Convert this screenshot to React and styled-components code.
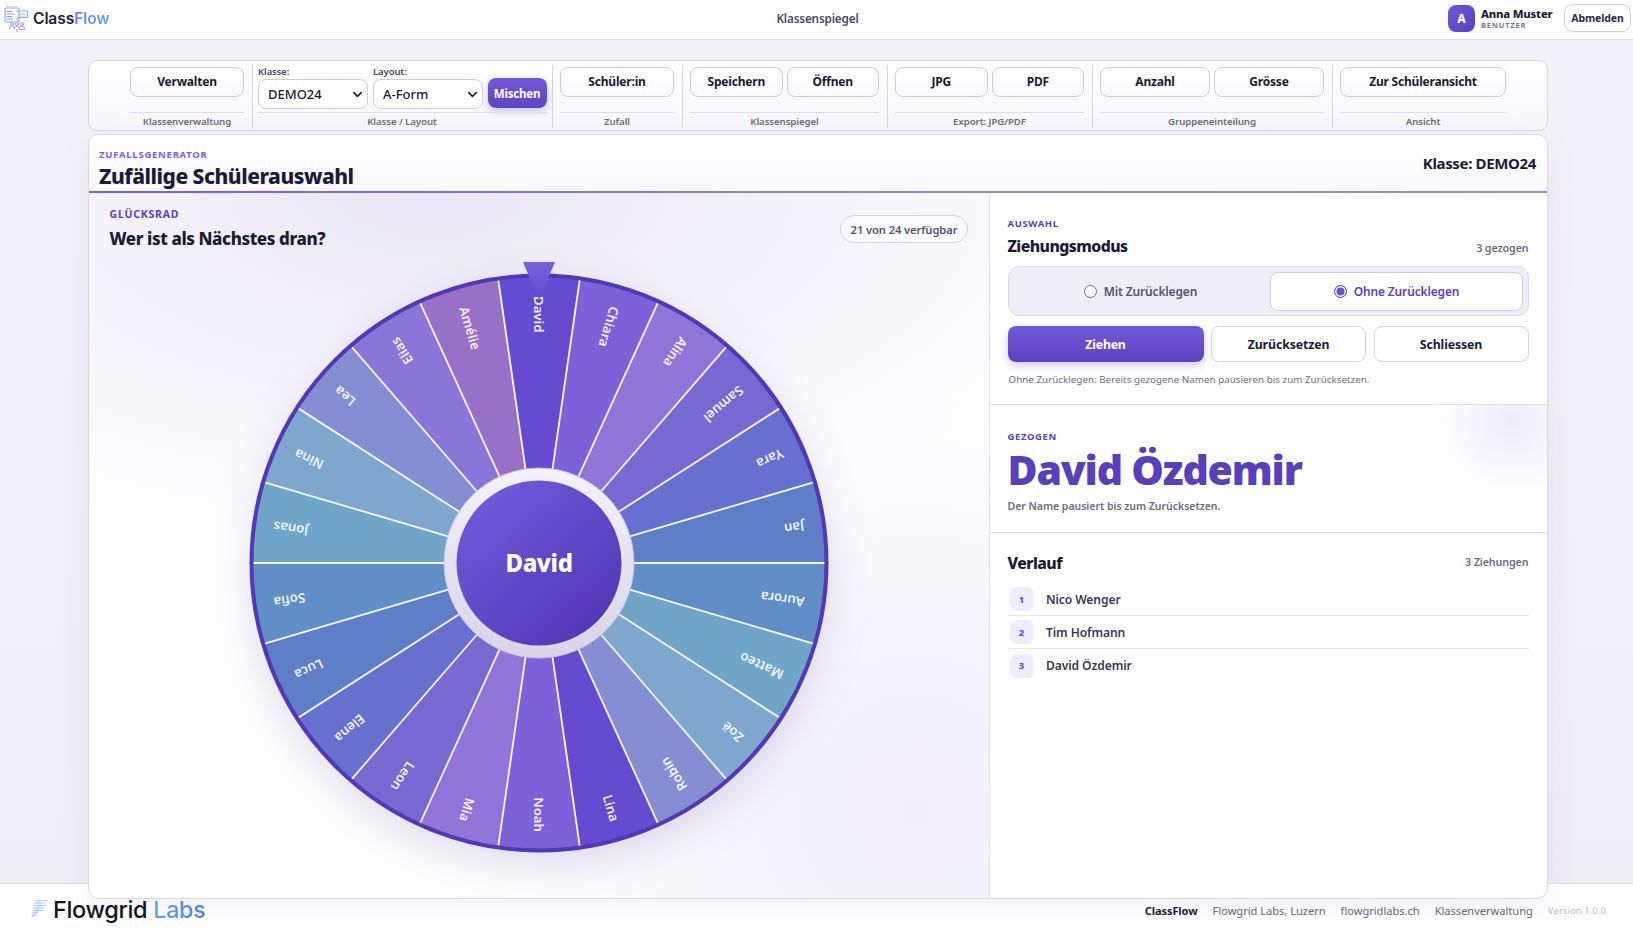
import React from "react";
import styled, { createGlobalStyle } from "styled-components";
import { ChevronDown } from "lucide-react";

const Global = createGlobalStyle`
  html, body { margin: 0; padding: 0; height: 100%; overflow: hidden; }
  body { background: #f3f1f8; font-family: "Noto Sans", "Open Sans", sans-serif; color: #1b1a33; }
  * { box-sizing: border-box; }
`;

const Page = styled.div`
  height: 929px; display: flex; flex-direction: column;
  background: linear-gradient(180deg, #f4f2f9, #efedf6);
`;
const Header = styled.header`
  height: 40px; flex: none; display: grid; grid-template-columns: 1fr auto 1fr; align-items: center;
  background: #fff; border-bottom: 1px solid #dcd8e8; padding: 0 2px 3px 4px;
`;
const Brand = styled.div`display: flex; align-items: center; gap: 4px;`;
const BrandName = styled.span`
  font-family: Inter, sans-serif; font-size: 15.6px; font-weight: 600; color: #1e2238; letter-spacing: -0.1px;
`;
const BrandAccent = styled.span`
  background: linear-gradient(90deg, #6a78e8, #62a6f2); -webkit-background-clip: text; background-clip: text; color: transparent;
`;
const PageName = styled.div`font-size: 11.7px; font-weight: 600; color: #454a60; letter-spacing: -0.15px;`;
const UserArea = styled.div`display: flex; align-items: center; justify-content: flex-end;`;
const Avatar = styled.div`
  width: 27px; height: 27px; border-radius: 8px; display: flex; align-items: center; justify-content: center;
  background: linear-gradient(135deg, #7058d8, #5a40bd); color: #fff; font-size: 12px; font-weight: 800;
`;
const UserText = styled.div`display: flex; flex-direction: column; margin-left: 6px; margin-right: 12px; width: 71px;`;
const UserName = styled.div`font-size: 11.3px; line-height: 13px; font-weight: 800; color: #1b1a33; letter-spacing: -0.2px; white-space: nowrap;`;
const UserRole = styled.div`font-size: 7.5px; line-height: 10px; font-weight: 700; color: #7a7890; letter-spacing: 0.8px;`;
const Logout = styled.button`
  width: 67px; height: 28px; border-radius: 9px; border: 1px solid #d3cde3; background: #fff;
  font: 700 10.5px "Noto Sans", sans-serif; color: #2b2a44; padding: 0; letter-spacing: -0.1px;
`;

const Workspace = styled.main`
  height: 858px; flex: none; margin-bottom: -15px; padding: 20px 85px 0 88px; position: relative; z-index: 1;
  display: flex; flex-direction: column; gap: 3px;
`;
const Toolbar = styled.div`
  height: 71px; flex: none; display: flex; justify-content: center; padding: 4px 0 2px;
  background: linear-gradient(180deg, #fff, #f7f6fb); border: 1px solid #d9d5e6; border-radius: 9px;
`;
const Group = styled.section`
  width: ${p => p.$width}px; padding: 2px ${p => p.$pad || 7.5}px 0; display: flex; flex-direction: column;
  border-right: ${p => (p.$last ? "none" : "1px solid #d9d5e6")};
`;
const GroupBody = styled.div`height: 45px; flex: none; display: flex; gap: ${p => p.$gap || 4}px; align-items: flex-start;`;
const GroupLabel = styled.div`
  border-top: 1px solid #e0dcea; height: 18px; line-height: 18px; text-align: center;
  font-size: 9.7px; font-weight: 600; color: #6c6a82; letter-spacing: -0.1px; white-space: nowrap;
`;
const ToolButton = styled.button`
  flex: 1; height: 30px; border-radius: 8px; border: 1px solid #cfcae0; background: linear-gradient(180deg, #fff, #faf9fd);
  font: 700 12px "Noto Sans", sans-serif; color: #1b1a33; letter-spacing: -0.2px; padding: 0 0 2px;
`;
const Field = styled.label`
  width: 110.5px; display: flex; flex-direction: column; gap: 2px;
  font-size: 9.5px; font-weight: 600; color: #45435c; line-height: 10px; letter-spacing: -0.1px; margin-top: 0; padding-left: 0.5px;
`;
const SelectWrap = styled.div`position: relative; height: 30px;`;
const Select = styled.select`
  appearance: none; width: 100%; height: 30px; border-radius: 8px; border: 1px solid #cfcae0; background: #fff;
  font: 500 13px "Noto Sans", sans-serif; color: #1b1a33; padding: 0 0 0 9px;
`;
const SelectIcon = styled(ChevronDown)`position: absolute; right: 3px; top: 8px; color: #1b1a33; pointer-events: none;`;
const Shuffle = styled.button`
  width: 59px; height: 30px; margin-top: 11px; border-radius: 8px; border: none; padding: 1px 0 0;
  background: linear-gradient(180deg, #7058d8, #5f45c4); box-shadow: 0 3px 8px rgba(90, 64, 190, .3);
  color: #fff; font: 700 11.5px "Noto Sans", sans-serif; letter-spacing: -0.2px;
`;

const Card = styled.div`
  height: 765px; flex: none; display: flex; flex-direction: column; background: #fff; overflow: hidden;
  border: 1px solid #dbd7e7; border-radius: 11px; box-shadow: 0 10px 32px rgba(80, 60, 160, .07);
`;
const CardHead = styled.div`
  height: 58px; flex: none; padding: 12px 10px 0; display: flex; justify-content: space-between; align-items: center;
  background: linear-gradient(180deg, #fff, #f9f8fc); border-bottom: 2px solid; border-image: linear-gradient(90deg, #7a5cd8, #9585dc 60%, #8794da) 1;
`;
const HeadText = styled.div`display: flex; flex-direction: column;`;
const Kicker = styled.div`
  font-size: ${p => p.$size || 9.5}px; line-height: 12px; font-weight: 700; letter-spacing: ${p => p.$spacing || 0.6}px; color: ${p => p.$color || "#5a3fbc"};
`;
const PageTitle = styled.h1`margin: 1px 0 -2px; font-size: 21px; line-height: 29px; font-weight: 800; color: #1a1c36; letter-spacing: -0.5px;`;
const ClassTag = styled.div`font-size: 15px; font-weight: 700; color: #1a1c36; margin-top: -13px; margin-right: 1px; letter-spacing: -0.35px;`;

const Split = styled.div`flex: 1; display: grid; grid-template-columns: 901px 1fr; min-height: 0;`;
const WheelPanel = styled.div`
  border-right: 1px solid #e2deec; display: flex; flex-direction: column;
  background:
    radial-gradient(ellipse 80% 50% at 38% 0%, #ebe7f7, rgba(235, 231, 247, 0) 100%),
    radial-gradient(circle 420px at 92% 88%, #f1eefa, rgba(241, 238, 250, 0) 100%),
    #fefefe;
`;
const WheelHead = styled.div`
  height: 70px; flex: none; padding: 15px 21px 0 20.5px; display: flex; justify-content: space-between; align-items: flex-start;
`;
const WheelQuestion = styled.h2`margin: 7px 0 0; font-size: 17px; line-height: 24px; font-weight: 800; color: #1b1a33; letter-spacing: -0.4px;`;
const Pill = styled.div`
  height: 28px; width: 128px; margin-top: 7px; border-radius: 14px; border: 1px solid #d8d3e6; background: #fbfaff;
  display: flex; align-items: center; justify-content: center; font-size: 11.2px; font-weight: 600; color: #55536c; letter-spacing: -0.1px;
`;
const WheelSvg = styled.svg`
  width: 600px; height: 600px; align-self: center; flex: none; overflow: visible;
`;
const WheelDisc = styled.g`filter: drop-shadow(0 14px 20px rgba(70, 50, 150, .17));`;
const WheelLabel = styled.text`
  font: 600 13.2px "Noto Sans", sans-serif; fill: rgba(255, 255, 255, .92);
`;
const HubLabel = styled.text`font: 800 24px "Noto Sans", sans-serif; fill: #fff; letter-spacing: -0.4px;`;

const SidePanel = styled.div`display: flex; flex-direction: column;`;
const ModeSection = styled.div`height: 212px; flex: none; padding: 25px 18.5px 0 17.5px; border-bottom: 1px solid #e2deec;`;
const TitleRow = styled.div`
  margin-top: ${p => p.$top || 0}px; display: flex; justify-content: space-between; align-items: center;
`;
const PanelTitle = styled.h3`margin: 0; font-size: 15.8px; line-height: 24px; font-weight: 800; color: #1b1a33; letter-spacing: -0.55px;`;
const Counter = styled.div`
  font-size: 10.7px; font-weight: 600; color: #6c6a82; letter-spacing: -0.1px; transform: translateY(${p => p.$shift || 0}px);
`;
const Segmented = styled.div`
  height: 50px; margin-top: 8px; padding: 4.5px; display: grid; grid-template-columns: 1fr 1fr; gap: 0;
  background: #efedf8; border: 1px solid #dcd8e9; border-radius: 11px;
`;
const Segment = styled.label`
  display: flex; align-items: center; justify-content: center; gap: 7px; font-size: 12px; font-weight: 600; letter-spacing: -0.15px;
  color: ${p => (p.$active ? "#5a3fbc" : "#55536c")}; background: ${p => (p.$active ? "#fff" : "transparent")};
  border: ${p => (p.$active ? "1px solid #d3cde3" : "1px solid transparent")}; border-radius: 8px;
  margin-left: ${p => (p.$active ? "2px" : "0")};
`;
const Radio = styled.span`
  width: 13px; height: 13px; border-radius: 50%; flex: none; background: #fff;
  border: ${p => (p.$on ? "1.5px solid #6a50d0" : "1px solid #6f6d80")};
  box-shadow: ${p => (p.$on ? "inset 0 0 0 1.5px #fff" : "none")};
  ${p => p.$on && "background: #6a50d0;"}
`;
const ActionRow = styled.div`margin-top: 10px; display: grid; grid-template-columns: 196px 155px 155px; gap: 7.5px;`;
const PrimaryAction = styled.button`
  height: 36px; border: none; border-radius: 8px; background: linear-gradient(180deg, #7259da, #5c42be);
  box-shadow: 0 4px 10px rgba(90, 64, 190, .25); color: #fff; font: 700 12.3px "Noto Sans", sans-serif; letter-spacing: -0.2px; padding: 0;
`;
const Action = styled.button`
  height: 36px; border: 1px solid #d3d3e8; border-radius: 8px; background: #fff; color: #1b1a33;
  font: 700 12.3px "Noto Sans", sans-serif; letter-spacing: -0.1px; padding: 0;
`;
const Hint = styled.p`margin: 12px 0 0 1px; font-size: 9.8px; line-height: 12px; color: #6c6a82; letter-spacing: .02px;`;

const ResultSection = styled.div`
  height: 128px; flex: none; padding: 26px 18.5px 0 17.5px; border-bottom: 1px solid #e2deec;
  background: radial-gradient(circle 82px at 523px 16px, #efecfb, rgba(239, 236, 251, 0) 100%);
`;
const ResultName = styled.div`
  font-size: 41px; line-height: 50px; font-weight: 900; color: #5a3fbc; letter-spacing: -1.2px; margin-top: 1px; white-space: nowrap;
`;
const ResultNote = styled.div`font-size: 10.5px; line-height: 14px; font-weight: 600; color: #6c6a82; margin-top: 5px; letter-spacing: -0.02px;`;

const HistorySection = styled.div`padding: 18px 18.5px 0 17.5px;`;
const HistoryList = styled.ol`margin: 8px 0 0; padding: 0; list-style: none;`;
const HistoryRow = styled.li`
  height: 33px; padding: 4px 0 4px 2px; display: flex; align-items: center; gap: 12.5px;
  border-bottom: ${p => (p.$last ? "none" : "1px solid #e6e3ef")};
  font-size: 12.1px; font-weight: 600; color: #3a3852; letter-spacing: -0.1px;
`;
const Badge = styled.span`
  width: 24px; height: 24px; border-radius: 7px; background: #efecfb; color: #6a50d0; flex: none;
  display: flex; align-items: center; justify-content: center; font-size: 9.5px; font-weight: 800;
`;

const Footer = styled.footer`
  flex: 1; display: flex; justify-content: space-between; align-items: center; background: #fff;
  border-top: 1px solid #dedaea; padding: 6px 27px 0 31px;
`;
const FooterBrand = styled.div`display: flex; align-items: center; gap: 5px; margin-top: -1px;`;
const FooterName = styled.span`font-family: Inter, sans-serif; font-size: 23.5px; font-weight: 500; color: #12141f; letter-spacing: -0.35px;`;
const FooterAccent = styled.span`
  background: linear-gradient(90deg, #6aa8ee, #4a80ee); -webkit-background-clip: text; background-clip: text; color: transparent;
`;
const FooterLinks = styled.nav`display: flex; align-items: center; gap: 15px; font-size: 11.1px; color: #656a7c; letter-spacing: -0.02px; margin-top: 1px;`;
const FooterStrong = styled.span`font-weight: 700; color: #1a1c36; letter-spacing: -0.1px;`;
const FooterVersion = styled.span`font-size: 9.7px; color: #b9bdca;`;

const NAMES = ["David","Chiara","Alina","Samuel","Yara","Jan","Aurora","Matteo","Zoë","Robin","Lina","Noah","Mia","Leon","Elena","Luca","Sofia","Jonas","Nina","Lea","Elias","Amélie"];
const COLORS = ["#654bcf","#7c62d8","#9174da","#7868d2","#6670cf","#5e7fc8","#5f8fc6","#6ea5c8","#7fa6cf","#838fd2","#654bcf","#7c62d8","#9174da","#7868d2","#6670cf","#5e7fc8","#5f8fc6","#6ea5c8","#7fa6cf","#838fd2","#8a76d8","#9870c8"];
const C = 300, R = 286, STEP = 360 / NAMES.length;
const polar = (r, deg) => {
  const a = (deg * Math.PI) / 180;
  return [C + r * Math.sin(a), C - r * Math.cos(a)];
};

function Wheel() {
  return (
    <WheelSvg viewBox="0 0 600 600">
      <defs>
        <linearGradient id="hub" x1="0.15" y1="0.1" x2="0.85" y2="0.9">
          <stop offset="0" stopColor="#7058d8" /><stop offset="1" stopColor="#5238b5" />
        </linearGradient>
        <linearGradient id="ring" x1="0" y1="0" x2="0" y2="1">
          <stop offset="0" stopColor="#f4f2fb" /><stop offset="1" stopColor="#d9d4e8" />
        </linearGradient>
        <linearGradient id="pointer" x1="0" y1="0" x2="0" y2="1">
          <stop offset="0" stopColor="#7662da" /><stop offset="1" stopColor="#654bcf" />
        </linearGradient>
      </defs>
      <WheelDisc>
        <circle cx={C} cy={C} r={288} fill="#5238b5" />
      </WheelDisc>
      {NAMES.map((n, i) => {
        const a0 = i * STEP - STEP / 2, a1 = a0 + STEP;
        const [x0, y0] = polar(R, a0), [x1, y1] = polar(R, a1);
        return <path key={n} d={`M${C} ${C}L${x0} ${y0}A${R} ${R} 0 0 1 ${x1} ${y1}Z`} fill={COLORS[i]} />;
      })}
      {NAMES.map((n, i) => {
        const a = i * STEP - STEP / 2;
        const [x0, y0] = polar(92, a), [x1, y1] = polar(R, a);
        return <line key={n} x1={x0} y1={y0} x2={x1} y2={y1} stroke="#f6f6fc" strokeWidth="1.8" />;
      })}
      <circle cx={C} cy={C} r={287.5} fill="none" stroke="#5238b5" strokeWidth="4" />
      {NAMES.map((n, i) => {
        const theta = i * STEP;
        const flipped = i >= 10 && i <= 20;
        const [x, y] = polar(268, theta);
        return (
          <WheelLabel key={n} x={x} y={y + 1} dy="0.35em" textAnchor={flipped ? "end" : "start"}
            transform={`rotate(${flipped ? theta - 90 : theta + 90} ${x} ${y + 1})`}>{n}</WheelLabel>
        );
      })}
      <circle cx={C} cy={C} r={95} fill="url(#ring)" stroke="#c6bfdc" strokeWidth="1" />
      <circle cx={C} cy={C} r={82.5} fill="url(#hub)" />
      <HubLabel x={C} y={C + 1} dy="0.35em" textAnchor="middle">David</HubLabel>
      <polygon points="284,-1 316,-1 300,37" fill="url(#pointer)" />
    </WheelSvg>
  );
}

function ClassFlowMark() {
  return (
    <svg width="25" height="27" viewBox="0 0 25 27" fill="none" strokeLinecap="round" strokeLinejoin="round">
      <rect x="1" y="3" width="14" height="14" rx="1.5" stroke="#8fa6ee" strokeWidth="1.1" />
      <path d="M3 6.5h5M3 9h7M3 11.5h5M3 14h6" stroke="#8b9cf0" strokeWidth="1" />
      <path d="M3 1.5h.1M6 1.5h.1M9 1.5h.1M12 1.5h.1" stroke="#9a8cec" strokeWidth="1.2" />
      <path d="M12 6h10.5a1.2 1.2 0 0 1 1.2 1.2v4a1.2 1.2 0 0 1-1.2 1.2H15l-2 2" stroke="#78b4f2" strokeWidth="1.1" />
      <path d="M16 9h5" stroke="#78b4f2" strokeWidth="1" />
      <circle cx="8" cy="19" r="1.5" stroke="#a08cea" strokeWidth=".9" />
      <circle cx="13" cy="19" r="1.5" stroke="#a08cea" strokeWidth=".9" />
      <circle cx="18" cy="19" r="1.5" stroke="#a08cea" strokeWidth=".9" />
      <path d="M5.5 24c0-2 1-3 2.5-3s2.5 1 2.5 3M10.5 24c0-2 1-3 2.5-3s2.5 1 2.5 3M15.5 24c0-2 1-3 2.5-3s2.5 1 2.5 3z" stroke="#a08cea" strokeWidth=".9" />
      <path d="M13 24.5v2" stroke="#a08cea" strokeWidth="1" />
    </svg>
  );
}

function FlowgridMark() {
  return (
    <svg width="17" height="20" viewBox="0 0 17 20" fill="none" strokeLinecap="round">
      <path d="M5 1.5h11M4.5 4h10M4 6.5h11" stroke="#a9d2f6" strokeWidth="1" />
      <path d="M3.5 9h9M3 11.5h8" stroke="#9cc4f5" strokeWidth="1" />
      <path d="M2.5 14h4M2 16.5h3" stroke="#93b4f3" strokeWidth="1" />
      <path d="M5 1.5C3.5 6 2 12 1 18.5M8 1.5C6.5 6 5 11 3.5 17M11 1.5C9.5 4 8 9 6 14" stroke="#a9c8f6" strokeWidth=".7" />
    </svg>
  );
}

export default function App() {
  return (
    <>
      <Global />
      <Page>
        <Header>
          <Brand>
            <ClassFlowMark />
            <BrandName>Class<BrandAccent>Flow</BrandAccent></BrandName>
          </Brand>
          <PageName>Klassenspiegel</PageName>
          <UserArea>
            <Avatar>A</Avatar>
            <UserText>
              <UserName>Anna Muster</UserName>
              <UserRole>BENUTZER</UserRole>
            </UserText>
            <Logout>Abmelden</Logout>
          </UserArea>
        </Header>
        <Workspace>
          <Toolbar>
            <Group $width={130}>
              <GroupBody><ToolButton>Verwalten</ToolButton></GroupBody>
              <GroupLabel>Klassenverwaltung</GroupLabel>
            </Group>
            <Group $width={300} $pad={5}>
              <GroupBody $gap={4.5}>
                <Field>Klasse:
                  <SelectWrap>
                    <Select defaultValue="DEMO24"><option>DEMO24</option></Select>
                    <SelectIcon size={15} strokeWidth={2.5} />
                  </SelectWrap>
                </Field>
                <Field>Layout:
                  <SelectWrap>
                    <Select defaultValue="A-Form"><option>A-Form</option></Select>
                    <SelectIcon size={15} strokeWidth={2.5} />
                  </SelectWrap>
                </Field>
                <Shuffle>Mischen</Shuffle>
              </GroupBody>
              <GroupLabel>Klasse / Layout</GroupLabel>
            </Group>
            <Group $width={130}>
              <GroupBody><ToolButton>Schüler:in</ToolButton></GroupBody>
              <GroupLabel>Zufall</GroupLabel>
            </Group>
            <Group $width={205}>
              <GroupBody><ToolButton>Speichern</ToolButton><ToolButton>Öffnen</ToolButton></GroupBody>
              <GroupLabel>Klassenspiegel</GroupLabel>
            </Group>
            <Group $width={205}>
              <GroupBody><ToolButton>JPG</ToolButton><ToolButton>PDF</ToolButton></GroupBody>
              <GroupLabel>Export: JPG/PDF</GroupLabel>
            </Group>
            <Group $width={240}>
              <GroupBody><ToolButton>Anzahl</ToolButton><ToolButton>Grösse</ToolButton></GroupBody>
              <GroupLabel>Gruppeneinteilung</GroupLabel>
            </Group>
            <Group $width={181} $last>
              <GroupBody><ToolButton>Zur Schüleransicht</ToolButton></GroupBody>
              <GroupLabel>Ansicht</GroupLabel>
            </Group>
          </Toolbar>
          <Card>
            <CardHead>
              <HeadText>
                <Kicker $color="#7a5ce6" $size={9.5} $spacing={0.75}>ZUFALLSGENERATOR</Kicker>
                <PageTitle>Zufällige Schülerauswahl</PageTitle>
              </HeadText>
              <ClassTag>Klasse: DEMO24</ClassTag>
            </CardHead>
            <Split>
              <WheelPanel>
                <WheelHead>
                  <div>
                    <Kicker $size={10.5} $spacing={0.8}>GLÜCKSRAD</Kicker>
                    <WheelQuestion>Wer ist als Nächstes dran?</WheelQuestion>
                  </div>
                  <Pill>21 von 24 verfügbar</Pill>
                </WheelHead>
                <Wheel />
              </WheelPanel>
              <SidePanel>
                <ModeSection>
                  <Kicker>AUSWAHL</Kicker>
                  <TitleRow $top={4}>
                    <PanelTitle>Ziehungsmodus</PanelTitle>
                    <Counter $shift={2}>3 gezogen</Counter>
                  </TitleRow>
                  <Segmented>
                    <Segment><Radio />Mit Zurücklegen</Segment>
                    <Segment $active><Radio $on />Ohne Zurücklegen</Segment>
                  </Segmented>
                  <ActionRow>
                    <PrimaryAction>Ziehen</PrimaryAction>
                    <Action>Zurücksetzen</Action>
                    <Action>Schliessen</Action>
                  </ActionRow>
                  <Hint>Ohne Zurücklegen: Bereits gezogene Namen pausieren bis zum Zurücksetzen.</Hint>
                </ModeSection>
                <ResultSection>
                  <Kicker>GEZOGEN</Kicker>
                  <ResultName>David Özdemir</ResultName>
                  <ResultNote>Der Name pausiert bis zum Zurücksetzen.</ResultNote>
                </ResultSection>
                <HistorySection>
                  <TitleRow>
                    <PanelTitle>Verlauf</PanelTitle>
                    <Counter $shift={-1}>3 Ziehungen</Counter>
                  </TitleRow>
                  <HistoryList>
                    <HistoryRow><Badge>1</Badge>Nico Wenger</HistoryRow>
                    <HistoryRow><Badge>2</Badge>Tim Hofmann</HistoryRow>
                    <HistoryRow $last><Badge>3</Badge>David Özdemir</HistoryRow>
                  </HistoryList>
                </HistorySection>
              </SidePanel>
            </Split>
          </Card>
        </Workspace>
        <Footer>
          <FooterBrand>
            <FlowgridMark />
            <FooterName>Flowgrid <FooterAccent>Labs</FooterAccent></FooterName>
          </FooterBrand>
          <FooterLinks>
            <FooterStrong>ClassFlow</FooterStrong>
            <span>Flowgrid Labs, Luzern</span>
            <span>flowgridlabs.ch</span>
            <span>Klassenverwaltung</span>
            <FooterVersion>Version 1.0.0</FooterVersion>
          </FooterLinks>
        </Footer>
      </Page>
    </>
  );
}
